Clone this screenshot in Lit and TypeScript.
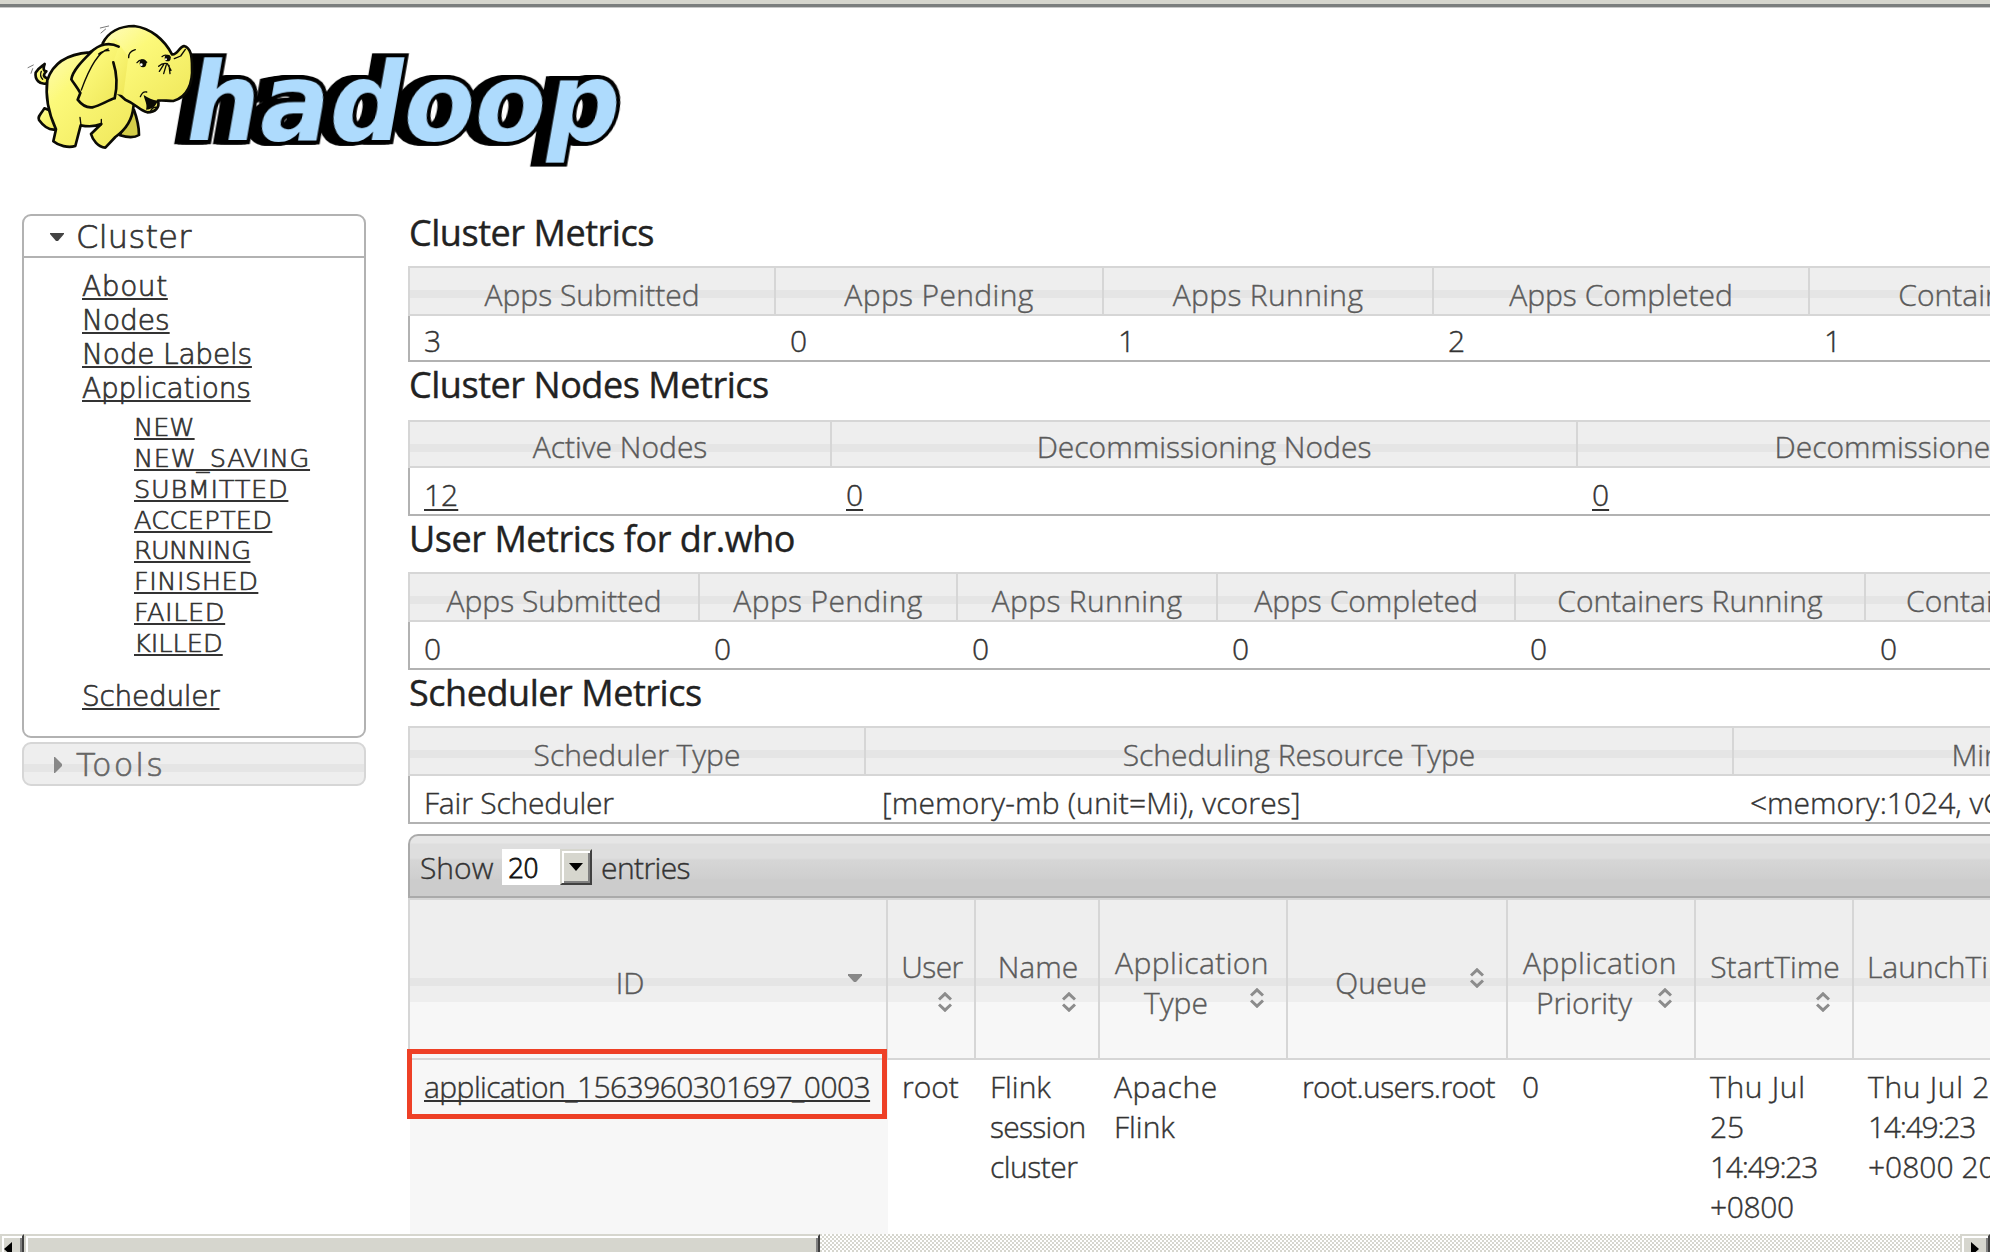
import { LitElement, html, css, svg } from "lit";
import { customElement, property } from "lit/decorators.js";

interface Column {
  title: string;
  value: string;
  width: number;
  link?: boolean;
}

interface MetricTable {
  title: string;
  headHeight: number;
  rowHeight: number;
  titleHeight: number;
  columns: Column[];
}

interface AppColumn {
  kind: string;
  title: string[];
  width: number;
  icon: "both" | "down";
  value: string[];
  link?: boolean;
}

const METRICS: MetricTable[] = [
  {
    title: "Cluster Metrics",
    titleHeight: 56,
    headHeight: 46,
    rowHeight: 44,
    columns: [
      { title: "Apps Submitted", value: "3", width: 366 },
      { title: "Apps Pending", value: "0", width: 328 },
      { title: "Apps Running", value: "1", width: 330 },
      { title: "Apps Completed", value: "2", width: 376 },
      { title: "Containers Running", value: "1", width: 444 },
    ],
  },
  {
    title: "Cluster Nodes Metrics",
    titleHeight: 58,
    headHeight: 44,
    rowHeight: 46,
    columns: [
      { title: "Active Nodes", value: "12", width: 422, link: true },
      { title: "Decommissioning Nodes", value: "0", width: 746, link: true },
      { title: "Decommissioned Nodes", value: "0", width: 724, link: true },
    ],
  },
  {
    title: "User Metrics for dr.who",
    titleHeight: 56,
    headHeight: 46,
    rowHeight: 46,
    columns: [
      { title: "Apps Submitted", value: "0", width: 290 },
      { title: "Apps Pending", value: "0", width: 258 },
      { title: "Apps Running", value: "0", width: 260 },
      { title: "Apps Completed", value: "0", width: 298 },
      { title: "Containers Running", value: "0", width: 350 },
      { title: "Containers Pending", value: "0", width: 346 },
    ],
  },
  {
    title: "Scheduler Metrics",
    titleHeight: 56,
    headHeight: 46,
    rowHeight: 46,
    columns: [
      { title: "Scheduler Type", value: "Fair Scheduler", width: 456 },
      {
        title: "Scheduling Resource Type",
        value: "[memory-mb (unit=Mi), vcores]",
        width: 868,
      },
      {
        title: "Minimum Allocation",
        value: "<memory:1024, vCores:1>",
        width: 704,
      },
    ],
  },
];

const APP_COLUMNS: AppColumn[] = [
  {
    kind: "id",
    title: ["ID"],
    width: 478,
    icon: "down",
    value: ["application_1563960301697_0003"],
    link: true,
  },
  { kind: "stacked", title: ["User"], width: 88, icon: "both", value: ["root"] },
  {
    kind: "stacked",
    title: ["Name"],
    width: 124,
    icon: "both",
    value: ["Flink", "session", "cluster"],
  },
  {
    kind: "double",
    title: ["Application", "Type"],
    width: 188,
    icon: "both",
    value: ["Apache", "Flink"],
  },
  {
    kind: "single",
    title: ["Queue"],
    width: 220,
    icon: "both",
    value: ["root.users.root"],
  },
  {
    kind: "double",
    title: ["Application", "Priority"],
    width: 188,
    icon: "both",
    value: ["0"],
  },
  {
    kind: "stacked",
    title: ["StartTime"],
    width: 158,
    icon: "both",
    value: ["Thu Jul", "25", "14:49:23", "+0800"],
  },
  {
    kind: "stacked",
    title: ["LaunchTime"],
    width: 190,
    icon: "both",
    value: ["Thu Jul 25", "14:49:23", "+0800 2019"],
  },
];

const APP_STATES = [
  "NEW",
  "NEW_SAVING",
  "SUBMITTED",
  "ACCEPTED",
  "RUNNING",
  "FINISHED",
  "FAILED",
  "KILLED",
];

const TRACKING: Record<string, number> = {
  "Apps Pending": 0.35,
  "Apps Running": 0.35,
  "[memory-mb (unit=Mi), vcores]": 0.17,
  "Fair Scheduler": -0.2,
  application_1563960301697_0003: -0.57,
  "root.users.root": -0.6,
  session: -0.7,
  cluster: -0.5,
  Apache: 0.6,
  Application: 0.4,
  User: -0.6,
  "Thu Jul": 0.7,
  "Thu Jul 25": 0.7,
  "14:49:23": -1.25,
  "+0800": -0.4,
  entries: -0.6,
  Cluster: 0.3,
  Tools: 2,
  About: 0.6,
  Applications: -0.2,
  "Node Labels": -0.2,
  Scheduler: -0.3,
  NEW_SAVING: 0.6,
  SUBMITTED: 0.7,
  ACCEPTED: 0.3,
  RUNNING: -0.7,
  FINISHED: 0.5,
  FAILED: 0.6,
};

const tracking = (text: string) => `letter-spacing: ${TRACKING[text] ?? 0}px`;

const columnTracks = (columns: { width: number }[]) =>
  `grid-template-columns: ${columns.map((c) => `${c.width}px`).join(" ")}`;

@customElement("hadoop-logo")
class HadoopLogo extends LitElement {
  static styles = css`
    :host {
      display: block;
    }
    svg {
      display: block;
      width: 640px;
      height: 180px;
    }
    .word {
      font: bold 108px "DejaVu Sans", sans-serif;
      fill: #aedbfd;
      stroke: #000;
      stroke-width: 8px;
      stroke-linejoin: miter;
      paint-order: stroke;
      filter: drop-shadow(-4px 0 0 #000) drop-shadow(-4px 0 0 #000)
        drop-shadow(-3px 0 0 #000);
    }
    .line {
      fill: none;
      stroke: #0b0b05;
      stroke-width: 8;
      stroke-linecap: round;
      stroke-linejoin: round;
    }
    .skin {
      fill: url(#skin);
    }
    .shade {
      fill: #d3cd49;
    }
    .thin {
      stroke-width: 4;
    }
    .faint {
      stroke: #777;
      stroke-width: 3;
    }
    .ink {
      fill: #0b0b05;
    }
  `;

  render() {
    return html`<svg viewBox="0 0 640 180" aria-label="hadoop">
      <defs>
        <linearGradient id="skin" x1="0" y1="0" x2="0.9" y2="1">
          <stop offset="0" stop-color="#fffcc0"></stop>
          <stop offset="0.35" stop-color="#fcf97a"></stop>
          <stop offset="1" stop-color="#efe75a"></stop>
        </linearGradient>
      </defs>
      <text
        class="word"
        transform="translate(181 140) skewX(-10)"
        textLength="434"
        lengthAdjust="spacingAndGlyphs"
      >hadoop</text>
      ${svg`<g transform="scale(.33333)">
        <path class="line skin" d="M133 325C122 343 112 350 117 360C130 378 148 392 168 388L172 340Z"/>
        <path class="line shade" d="M402 330C410 352 417 380 417 405C400 416 380 412 360 406L380 350Z"/>
        <path class="line skin" d="M142 250C118 256 104 238 107 218C114 204 128 198 134 192C129 205 130 214 139 214C131 222 126 230 144 236"/>
        <path class="line thin" d="M124 214Q118 228 128 238"/>
        <path class="line skin" d="M268 157C205 162 160 185 142 240C134 300 148 345 168 388L160 424C175 437 205 445 226 438L242 376C262 380 285 380 304 372L273 402C278 420 294 441 316 443L346 411C378 388 397 358 400 322L420 220L320 130Z"/>
        <path class="line thin" d="M240 352L243 376M304 358V374"/>
        <path class="line skin" d="M308 130C325 96 360 78 402 78C452 84 493 119 516 163C532 166 536 142 552 138C574 144 576 172 576 200C579 250 562 292 520 303C500 303 488 300 474 302C480 322 466 337 442 337C416 330 408 312 376 299L320 250Z"/>
        <path class="skin" d="M300 145L345 115L385 170L370 285L330 280Z"/>
        <path class="ink" d="M431 285C444 294 458 300 473 302C468 318 458 327 438 329C443 313 434 303 431 285Z"/>
        <path class="line thin" d="M421 290Q428 273 440 276M452 333Q459 318 472 323"/>
        <path class="line skin" d="M356 140C330 127 298 130 272 158C245 185 218 212 214 238C222 251 230 260 241 279L233 299C246 316 260 324 277 322C302 316 323 301 344 295C352 260 350 218 340 187"/>
        <path class="line thin" d="M325 147C298 155 270 198 244 270M296 162Q308 151 327 152"/>
        <path class="line thin" d="M386 173Q385 155 406 149M411 188Q424 172 440 187M486 170Q497 160 510 172M523 176L542 168L556 148"/>
        <ellipse class="ink" cx="429" cy="190" rx="10" ry="12"/>
        <circle cx="424" cy="194" r="4" fill="#fff"/>
        <ellipse class="ink" cx="503" cy="174" rx="9" ry="10"/>
        <circle cx="498" cy="178" r="3" fill="#fff"/>
        <path class="line thin" d="M476 199Q488 187 502 191L513 211M491 194L478 214M499 194L491 221M507 196L510 221"/>
        <path class="line faint" d="M301 84L326 78M303 99L317 87M84 203L100 195M93 220L98 206"/>
      </g>`}
    </svg>`;
  }
}

@customElement("sort-icon")
class SortIcon extends LitElement {
  @property() direction: "both" | "down" = "both";

  static styles = css`
    :host {
      display: block;
      width: 14px;
      height: 20px;
    }
    svg {
      display: block;
      width: 14px;
      height: 20px;
    }
    .chevron {
      fill: none;
      stroke: #8c8c8c;
      stroke-width: 3;
    }
    .triangle {
      fill: #888;
    }
  `;

  render() {
    return html`<svg viewBox="0 0 14 20">
      ${this.direction === "down"
        ? svg`<path class="triangle" d="M0 6H14V7.5L8 14H6L0 7.5Z"/>`
        : svg`<path class="chevron" d="M1 7.5L7 1.8L13 7.5M1 12.5L7 18.2L13 12.5"/>`}
    </svg>`;
  }
}

@customElement("side-nav")
class SideNav extends LitElement {
  static styles = css`
    :host {
      display: flex;
      flex-direction: column;
      gap: 4px;
      width: 344px;
      font-family: "DejaVu Sans", Verdana, sans-serif;
      font-weight: 200;
      -webkit-text-stroke: 0.7px;
      color: #333;
    }
    .panel {
      box-sizing: border-box;
      height: 524px;
      border: 2px solid #b2b2b2;
      border-radius: 9px;
    }
    .title {
      box-sizing: border-box;
      display: flex;
      align-items: center;
      height: 44px;
      padding: 2px 0 0 26px;
      font-size: 32px;
    }
    .panel .title {
      height: 42px;
      border-bottom: 2px solid #b2b2b2;
    }
    .tools {
      border: 2px solid #d6d6d6;
      border-radius: 9px;
      background: linear-gradient(#eee 20px, #e5e5e5 20px 28px, #eee 28px);
      color: #666;
    }
    .arrow {
      width: 14px;
      height: 16px;
      margin-right: 12px;
      stroke: none;
    }
    .main {
      padding: 12px 0 0 58px;
      font-size: 28px;
      line-height: 34px;
    }
    .sub {
      padding: 6px 0 21px 52px;
      font-size: 25.6px;
      line-height: 30.86px;
    }
    .item {
      display: block;
      color: inherit;
      text-decoration: underline;
      text-decoration-thickness: 2px;
      text-underline-offset: 2px;
      text-decoration-skip-ink: none;
      width: max-content;
    }
  `;

  private item = (text: string) =>
    html`<a class="item" style=${tracking(text)}>${text}</a>`;

  render() {
    return html`
      <div class="panel">
        <div class="title">
          <svg class="arrow" viewBox="0 0 14 16"><path fill="#444" d="M0 4H14V5L8 12H6L0 5Z"></path></svg>
          <span style=${tracking("Cluster")}>Cluster</span>
        </div>
        <nav class="main">
          ${["About", "Nodes", "Node Labels", "Applications"].map(this.item)}
          <div class="sub">${APP_STATES.map(this.item)}</div>
          ${this.item("Scheduler")}
        </nav>
      </div>
      <div class="title tools">
        <svg class="arrow" viewBox="0 0 14 16"><path fill="#888" d="M4 0H5L12 7V9L5 16H4Z"></path></svg>
        <span style=${tracking("Tools")}>Tools</span>
      </div>
    `;
  }
}

@customElement("metric-table")
class MetricTableView extends LitElement {
  @property({ attribute: false }) data!: MetricTable;

  static styles = css`
    :host {
      display: block;
    }
    .title {
      box-sizing: border-box;
      margin: 0;
      padding: 1px 0 0 1px;
      font-size: 36px;
      line-height: 44px;
      font-weight: 400;
      letter-spacing: -0.45px;
      color: #222;
      -webkit-text-stroke: 0.4px #222;
    }
    .row {
      display: grid;
      width: max-content;
      border-left: 2px solid #b2b2b2;
      border-bottom: 2px solid #b2b2b2;
    }
    .head {
      border: solid #d6d6d6;
      border-width: 2px 0 2px 2px;
      background: linear-gradient(#eee 22px, #e5e5e5 22px 30px, #eee 30px);
    }
    .cell {
      box-sizing: border-box;
      display: flex;
      align-items: flex-end;
      line-height: 39px;
      white-space: nowrap;
      color: #333;
      padding-left: 14px;
    }
    .cell + .cell {
      padding-left: 16px;
    }
    .cell + .number {
      padding-left: 14px;
    }
    .head .cell {
      justify-content: center;
      padding: 0;
      color: #5a5a5a;
      border-right: 2px solid #d6d6d6;
    }
    .link {
      text-decoration: underline;
      text-decoration-thickness: 2px;
      text-underline-offset: 3px;
    }
  `;

  render() {
    const { title, titleHeight, headHeight, rowHeight, columns } = this.data;
    const tracks = columnTracks(columns);
    return html`
      <h3 class="title" style="height: ${titleHeight}px">${title}</h3>
      <div class="row head" style="${tracks}; height: ${headHeight}px">
        ${columns.map(
          (c) => html`<div class="cell" style=${tracking(c.title)}>${c.title}</div>`,
        )}
      </div>
      <div class="row" style="${tracks}; height: ${rowHeight}px">
        ${columns.map(
          (c) => html`<div class="cell ${/^\d+$/.test(c.value) ? "number" : ""}">
            <span class=${c.link ? "link" : ""} style=${tracking(c.value)}>${c.value}</span>
          </div>`,
        )}
      </div>
    `;
  }
}

@customElement("apps-table")
class AppsTable extends LitElement {
  static styles = css`
    :host {
      display: block;
      margin-top: 10px;
      color: #333;
    }
    .toolbar {
      box-sizing: border-box;
      display: flex;
      height: 64px;
      align-items: center;
      border: 2px solid #aaa;
      border-right: 0;
      border-top-left-radius: 10px;
      padding: 2px 0 0 10px;
      width: 1700px;
      line-height: 39px;
      background: linear-gradient(
        #e6e6e6 7px,
        #dedede 8px 22px,
        #d6d6d6 24px,
        #cfcfcf 42px,
        #ccc 44px
      );
    }
    .show {
      width: 74px;
    }
    .select {
      display: flex;
      width: 90px;
      height: 36px;
      margin: -1px 9px 0 8px;
      background: #fff;
      justify-content: space-between;
    }
    .choice {
      padding-left: 6px;
      font: 200 26px/40px "DejaVu Sans", sans-serif;
      letter-spacing: -1.8px;
      color: #111;
      -webkit-text-stroke: 0.8px;
    }
    .drop {
      box-sizing: border-box;
      display: grid;
      place-items: center;
      width: 32px;
      height: 36px;
      border: 2px solid;
      border-color: #d6d6ce #404040 #404040 #d6d6ce;
      box-shadow: inset 2px 2px #fff, inset -2px -2px #808080;
      background: #d6d6ce;
    }
    .grid {
      display: grid;
      width: max-content;
    }
    .head {
      height: 158px;
      border: solid #d6d6d6;
      border-width: 2px 0 2px 2px;
      background: linear-gradient(
        #eee 78px,
        #e5e5e5 78px 86px,
        #eee 86px 102px,
        #f7f7f7 102px
      );
    }
    .head-cell {
      box-sizing: border-box;
      display: flex;
      border-right: 2px solid #d6d6d6;
      color: #5a5a5a;
      line-height: 40px;
      text-align: center;
      padding: 47px 20px 0 14px;
      flex-direction: column;
    }
    .stacked {
      align-items: center;
      padding-right: 12px;
    }
    .stacked sort-icon {
      align-self: flex-end;
      margin: 5px 10px 0 0;
    }
    .double {
      display: grid;
      grid-template-columns: 1fr 14px;
      align-content: start;
      padding: 43px 22px 0 0;
    }
    .double .label:first-child {
      grid-column: 1 / -1;
      margin-right: -20px;
    }
    .double sort-icon {
      margin-top: 5px;
    }
    .double .last {
      margin: 0 12px 0 14px;
    }
    .single,
    .id {
      flex-direction: row;
      justify-content: space-between;
      padding-top: 63px;
      padding-right: 22px;
    }
    .single {
      padding-left: 4px;
    }
    .single .label,
    .id .label {
      flex: 1;
    }
    .single sort-icon,
    .id sort-icon {
      margin-top: 5px;
    }
    .id {
      padding: 63px 24px 0 2px;
    }
    .body {
      height: 192px;
    }
    .cell {
      padding: 7px 0 0 14px;
      line-height: 40px;
      white-space: nowrap;
    }
    .cell:first-child {
      background: #f7f7f7;
      margin-left: 2px;
    }
    .line {
      display: block;
    }
    .link {
      position: relative;
      text-decoration: underline;
      text-decoration-thickness: 2px;
      text-underline-offset: 2px;
      text-decoration-skip-ink: none;
    }
    .text {
      display: inline-block;
      text-decoration: inherit;
    }
    .link {
      width: max-content;
    }
    .mark {
      position: absolute;
      box-sizing: border-box;
      left: -17px;
      top: -18px;
      width: 480px;
      height: 70px;
      border: 5px solid #ee4026;
    }
  `;

  render() {
    const first = APP_COLUMNS[0];
    const bodyTracks = columnTracks([
      { width: first.width + 2 },
      ...APP_COLUMNS.slice(1),
    ]);
    return html`
      <div class="toolbar">
        <span class="show">Show</span>
        <span class="select">
          <span class="choice">20</span>
          <span class="drop">
            <svg width="14" height="8" viewBox="0 0 14 8"><path d="M0 0H14L7 8Z"></path></svg>
          </span>
        </span>
        <span style=${tracking("entries")}>entries</span>
      </div>
      <div class="grid head" style=${columnTracks(APP_COLUMNS)}>
        ${APP_COLUMNS.map(
          (c) => html`<div class="head-cell ${c.kind}">
            ${c.title.map(
              (t, i) =>
                html`<span class="label ${i > 0 ? "last" : ""}" style=${tracking(t)}>${t}</span>`,
            )}
            <sort-icon .direction=${c.icon}></sort-icon>
          </div>`,
        )}
      </div>
      <div class="grid body" style=${bodyTracks}>
        ${APP_COLUMNS.map(
          (c) => html`<div class="cell">
            ${c.value.map((v) =>
              c.link
                ? html`<span class="line link" style=${tracking(v)}>${v}<span class="mark"></span></span>`
                : html`<span class="line" style=${tracking(v)}>${v}</span>`,
            )}
          </div>`,
        )}
      </div>
    `;
  }
}

@customElement("app-root")
class AppRoot extends LitElement {
  static styles = css`
    :host {
      display: flex;
      flex-direction: column;
      width: 1990px;
      height: 1252px;
      overflow: hidden;
      background: #fff;
      font: 300 30px/40px "Open Sans", "Noto Sans", sans-serif;
      -webkit-text-stroke: 0.4px;
    }
    .edge {
      box-sizing: border-box;
      flex: none;
      height: 8px;
      background: #d6d6ce;
      border-bottom: 1px solid #c8c8c8;
      box-shadow: inset 0 -3px #7b7e7e;
    }
    .banner {
      flex: none;
      height: 202px;
    }
    .logo {
      margin-top: -8px;
    }
    .content {
      display: flex;
      flex: none;
      height: 1024px;
      gap: 42px;
      padding-left: 22px;
      overflow: hidden;
    }
    .nav {
      flex: none;
      margin-top: 4px;
    }
    .main {
      flex: none;
    }
    .scrollbar {
      display: flex;
      flex: none;
      height: 18px;
      background: repeating-conic-gradient(#fff 0 25%, #d6d6ce 0 50%) 0 0 / 4px 4px;
      justify-content: space-between;
    }
    .start {
      display: flex;
    }
    .key {
      box-sizing: border-box;
      width: 24px;
      height: 32px;
      border: 2px solid;
      border-color: #d6d6ce #404040 #404040 #d6d6ce;
      box-shadow: inset 2px 2px #fff, inset -2px -2px #808080;
      background: #d6d6ce;
      padding: 6px 0 0 2px;
    }
    .end {
      width: 30px;
      padding-left: 9px;
    }
    .thumb {
      width: 796px;
    }
    .glyph {
      display: block;
    }
  `;

  render() {
    return html`
      <div class="edge"></div>
      <header class="banner"><hadoop-logo class="logo"></hadoop-logo></header>
      <div class="content">
        <side-nav class="nav"></side-nav>
        <main class="main">
          ${METRICS.map((m) => html`<metric-table .data=${m}></metric-table>`)}
          <apps-table></apps-table>
        </main>
      </div>
      <div class="scrollbar">
        <div class="start">
          <div class="key">
            <svg class="glyph" width="8" height="14" viewBox="0 0 8 14"><path d="M8 0V14L0 7Z"></path></svg>
          </div>
          <div class="key thumb"></div>
        </div>
        <div class="key end">
          <svg class="glyph" width="8" height="14" viewBox="0 0 8 14"><path d="M0 0V14L8 7Z"></path></svg>
        </div>
      </div>
    `;
  }
}
